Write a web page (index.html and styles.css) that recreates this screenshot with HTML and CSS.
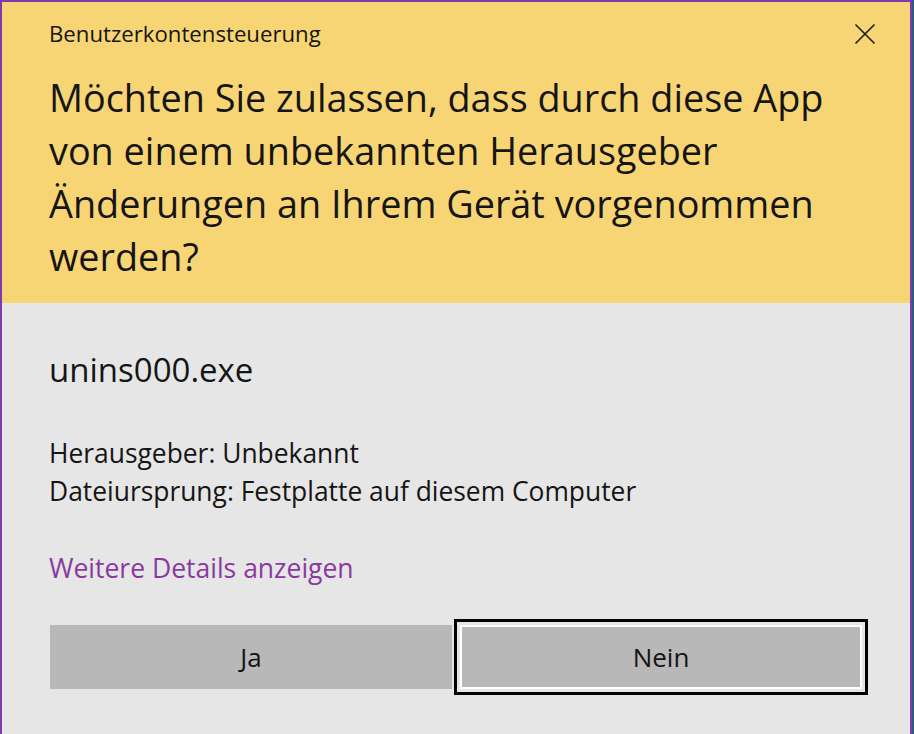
FILE: index.html
```html
<!DOCTYPE html>
<html>
<head>
    <title>Benutzerkontensteuerung</title>
    <link rel="stylesheet" href="styles.css">
</head>
<body>
    <div class="window">
        <div class="header">
            <div class="titlebar">
                <span class="caption">Benutzerkontensteuerung</span>
                <svg class="close" width="22" height="22" viewBox="0 0 22 22">
                    <path d="M1.5 1.5 L20.5 20.5 M20.5 1.5 L1.5 20.5" stroke="#1a1a1a" stroke-width="1.6" fill="none"/>
                </svg>
            </div>
            <h1>Möchten Sie zulassen, dass durch diese App<br>von einem unbekannten Herausgeber<br>Änderungen an Ihrem Gerät vorgenommen<br>werden?</h1>
        </div>

        <div class="content">
            <div class="app-name">unins000.exe</div>
            <div class="info">
                <div>Herausgeber: Unbekannt</div>
                <div>Dateiursprung: Festplatte auf diesem Computer</div>
            </div>
            <a class="details" href="#">Weitere Details anzeigen</a>
            <div class="buttons">
                <button class="btn">Ja</button>
                <button class="btn focused">Nein</button>
            </div>
        </div>
    </div>
</body>
</html>
```

FILE: styles.css
```css
html, body { margin: 0; height: 100%; }
body { background: #2c5d78; font-family: "Open Sans", "Noto Sans", sans-serif; color: #151515; }
.window { width: 908px; height: 732px; border: 2px solid #7a3cae; border-bottom: none; background: #e6e6e6; overflow: hidden; }
.header { background: #f8d574; height: 301px; padding-left: 47px; box-sizing: border-box; }
.titlebar { display: flex; justify-content: space-between; align-items: center; height: 64px; padding-right: 34px; }
.caption { font-size: 22.2px; line-height: 30px; }
h1 { margin: 5px 0 0; font-weight: normal; font-size: 37.8px; line-height: 53px; white-space: nowrap; }
.content { padding: 47px 0 0 47px; }
.app-name { font-size: 33px; line-height: 40px; }
.info { margin-top: 44px; font-size: 26.4px; line-height: 38px; }
.details { display: block; margin-top: 39px; color: #8a3a9e; text-decoration: none; font-size: 26.5px; line-height: 38px; }
.buttons { display: flex; gap: 8px; margin-top: 38px; padding-left: 1px; }
.btn { width: 402px; height: 64px; background: #b8b8b8; border: none; font-family: inherit; font-size: 26px; color: #151515; }
.focused { outline: 3px solid #000; outline-offset: 3px; box-shadow: 0 0 0 2px #fff inset; }
```
